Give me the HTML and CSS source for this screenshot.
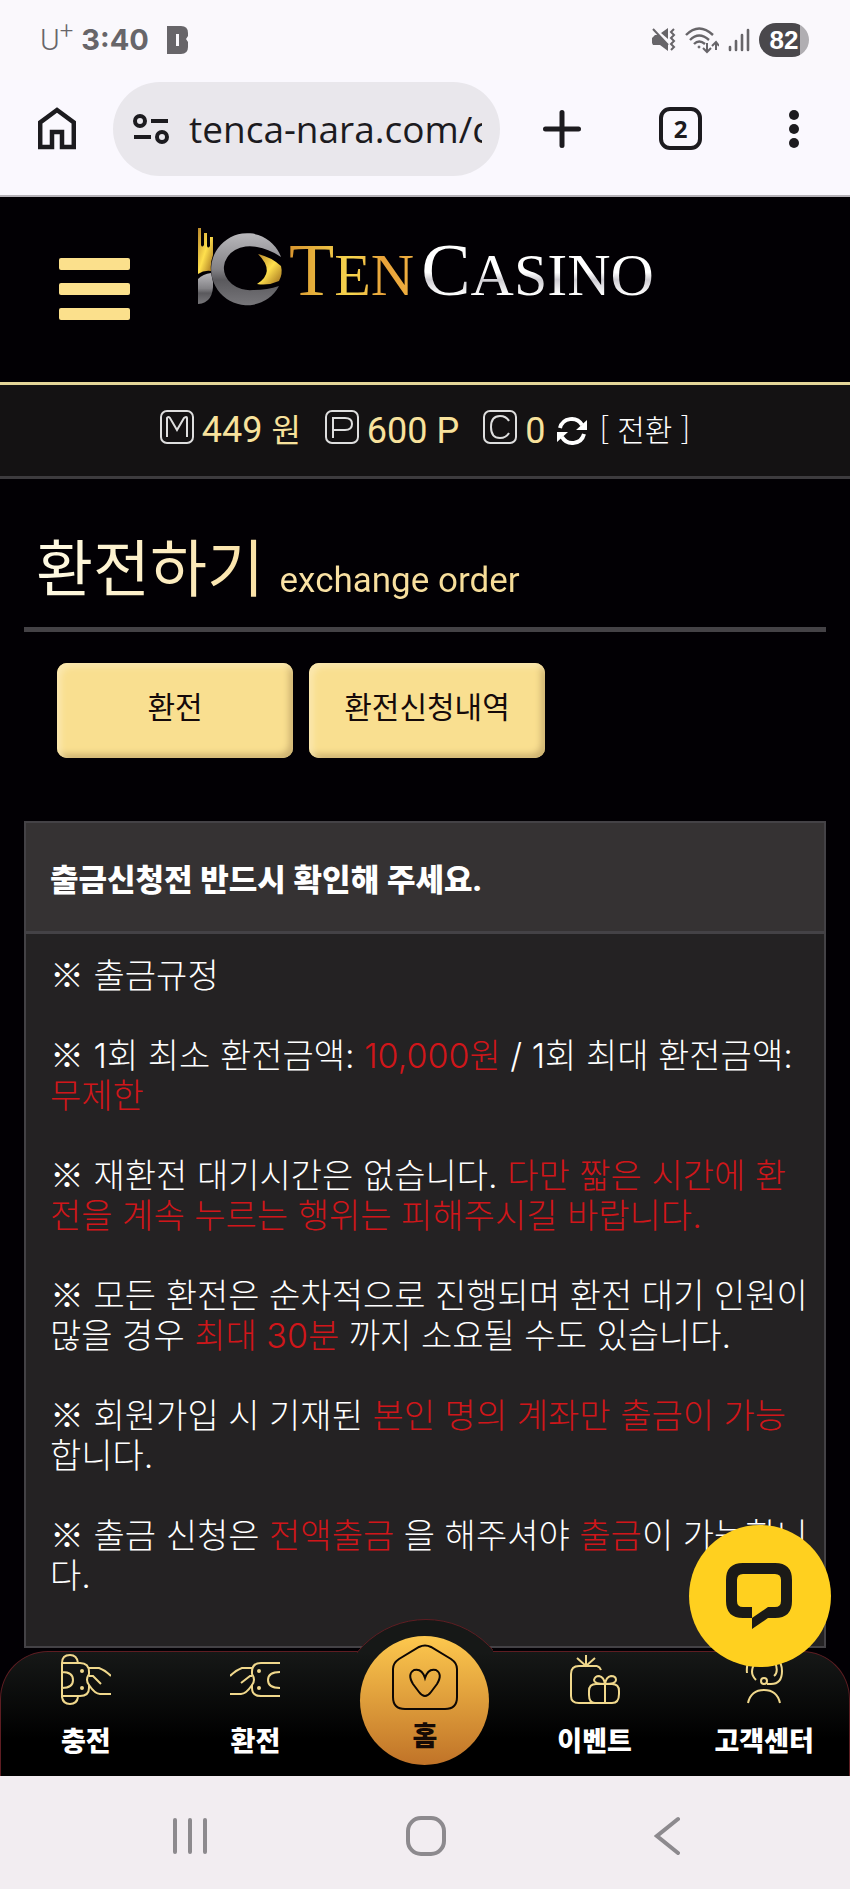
FILE: index.html
```
<!DOCTYPE html>
<html lang="ko">
<head>
    <meta charset="UTF-8">
    <meta name="viewport" content="width=device-width, initial-scale=1.0">
    <title>TEN CASINO - 환전하기</title>
    <link rel="stylesheet" href="styles.css">
</head>
<body>
    <div class="status-bar">
        <div class="status-left">
            <span class="carrier">U<sup>+</sup></span>
            <span class="clock">3:40</span>
            <svg class="app-icon" width="22" height="28" viewBox="0 0 22 28">
                <path fill="#676569" fill-rule="evenodd" d="M0 0H14Q21 0 21 7V10L19 13L21 16V21Q21 28 14 28H0ZM9 8V20H12V8Z"/>
            </svg>
        </div>
        <div class="status-right">
            <svg width="24" height="24" viewBox="0 0 24 24" fill="#676569">
                <path d="M0 10L3 7H6L16 17V23L8 17H1L0 15ZM9 5L16 0V11Z"/>
                <path d="M1 1L16 17M22 1L19 4L22 7L19 10L22 13L19 16L22 19L19 22" fill="none" stroke="#676569" stroke-width="2"/>
            </svg>
            <svg width="34" height="28" viewBox="0 0 34 28" fill="none" stroke="#676569" stroke-width="2.4">
                <path d="M1 9Q14 -4 28 9M5 14Q14 5 24 14M9 18Q14 13 20 18"/>
                <circle cx="14" cy="21" r="1" fill="#676569" stroke-width="1"/>
                <path d="M22 17V26M18 22L22 26L26 22M31 24V16M27 20L31 16L34 20" stroke-width="2"/>
            </svg>
            <svg width="22" height="24" viewBox="0 0 22 24" stroke="#676569" stroke-width="2.6" stroke-linecap="round">
                <path d="M2 19V22M8 13V22M14 7V22M20 2V22"/>
            </svg>
            <span class="battery">82</span>
        </div>
    </div>

    <div class="browser-bar">
        <button class="icon-btn" aria-label="홈페이지">
            <svg width="38" height="43" viewBox="0 0 38 43">
                <path d="M2.200 40V15.500L19 3L35.800 15.500V40H24V25H14V40Z" fill="none" stroke="#1c1b1f" stroke-width="4.500"/>
            </svg>
        </button>
        <div class="url-box">
            <svg width="36" height="30" viewBox="0 0 36 30" fill="none" stroke="#1c1b1f" stroke-width="4">
                <circle cx="7" cy="7" r="5"/>
                <path d="M18 7H35M1 23H18"/>
                <circle cx="29" cy="23" r="5"/>
            </svg>
            <input class="url" type="text" value="tenca-nara.com/c" aria-label="주소">
        </div>
        <div class="browser-actions">
            <button class="icon-btn" aria-label="새 탭">
                <svg width="38" height="38" viewBox="0 0 38 38" stroke="#1c1b1f" stroke-width="5" stroke-linecap="round">
                    <path d="M19 2.500V35.500M2.500 19H35.500"/>
                </svg>
            </button>
            <button class="tab-count" aria-label="탭 2개">2</button>
            <button class="icon-btn" aria-label="메뉴">
                <svg width="12" height="40" viewBox="0 0 12 40" fill="#1c1b1f">
                    <circle cx="6" cy="6" r="5"/><circle cx="6" cy="20" r="5"/><circle cx="6" cy="34" r="5"/>
                </svg>
            </button>
        </div>
    </div>

    <header class="site-header">
        <button class="hamburger" aria-label="전체메뉴"><i></i><i></i><i></i></button>
        <a class="logo" href="#">
            <svg width="86" height="78" viewBox="0 0 86 78">
                <defs>
                    <linearGradient id="gold" x1="0" y1="0" x2="1" y2="1">
                        <stop offset="0" stop-color="#b8862a"/><stop offset=".5" stop-color="#ffe04d"/><stop offset="1" stop-color="#9c6a1c"/>
                    </linearGradient>
                    <linearGradient id="silver" x1="0" y1="0" x2="0" y2="1">
                        <stop offset="0" stop-color="#b9b8bc"/><stop offset=".5" stop-color="#838286"/><stop offset=".65" stop-color="#5a595d"/><stop offset="1" stop-color="#77767a"/>
                    </linearGradient>
                </defs>
                <path fill="url(#gold)" d="M1 0H4V17Q5 20 7 17V5H10V18Q11 21 13 18V9H16V27Q13 35 14 43Q7 42 1 46Z"/>
                <path fill="url(#silver)" d="M1 51Q6 46 14 45L16 54Q17 75 1 76Z"/>
                <path fill="url(#silver)" d="M84 29A36 36 0 1 0 82 58Q70 62 56 62A26 22 0 1 1 60 19Q72 21 84 29Z"/>
                <path fill="url(#gold)" d="M61 26Q74 29 84 38Q86 46 82 53Q71 58 60 56Q79 44 61 26Z"/>
            </svg>
            <span class="logo-ten">T<small>EN</small></span>
            <span class="logo-casino">C<small>ASINO</small></span>
        </a>
    </header>

    <div class="my-info">
        <span class="info-badge"><svg width="34" height="34" viewBox="0 0 34 34"><rect x="1" y="1" width="32" height="32" rx="6"/><path d="M7 27V8Q8 6 10 8L17 20L24 8Q27 6 27 8V27"/></svg></span>
        <span class="info-value">449 <span class="won">원</span></span>
        <span class="info-badge"><svg width="34" height="34" viewBox="0 0 34 34"><rect x="1" y="1" width="32" height="32" rx="6"/><path d="M8 28V8H20Q27 8 27 14Q27 20 20 20H8"/></svg></span>
        <span class="info-value">600 P</span>
        <span class="info-badge"><svg width="34" height="34" viewBox="0 0 34 34"><rect x="1" y="1" width="32" height="32" rx="6"/><path d="M26 11Q23 6 17 6Q8 6 8 17Q8 28 17 28Q23 28 26 23"/></svg></span>
        <span class="info-value">0</span>
        <svg class="refresh" width="30" height="30" viewBox="0 0 30 30">
            <path d="M3 12A12 12 0 0 1 25 9M27 18A12 12 0 0 1 5 21" fill="none" stroke="#fff" stroke-width="4"/>
            <path d="M30 4V14H19ZM0 26V16H11Z" fill="#fff"/>
        </svg>
        <a class="convert" href="#">[ 전환 ]</a>
    </div>

    <main class="content">
        <h1 class="page-title"><span>환전하기 <small>exchange order</small></span></h1>
        <div class="tabs">
            <button class="tab">환전</button>
            <button class="tab">환전신청내역</button>
        </div>
        <section class="notice">
            <h2 class="notice-head">출금신청전 반드시 확인해 주세요.</h2>
            <div class="notice-body">
                <p><i>※</i> 출금규정</p>
                <p><i>※</i> 1회 최소 환전금액: <em>10,000원</em> / 1회 최대 환전금액:<br><em>무제한</em></p>
                <p><i>※</i> 재환전 대기시간은 없습니다. <em>다만 짧은 시간에 환<br>전을 계속 누르는 행위는 피해주시길 바랍니다.</em></p>
                <p><i>※</i> 모든 환전은 순차적으로 진행되며 환전 대기 인원이<br>많을 경우 <em>최대 30분</em> 까지 소요될 수도 있습니다.</p>
                <p><i>※</i> 회원가입 시 기재된 <em>본인 명의 계좌만 출금이 가능</em><br>합니다.</p>
                <p><i>※</i> 출금 신청은 <em>전액출금</em> 을 해주셔야 <em>출금</em>이 가능합니<br>다.</p>
            </div>
        </section>
    </main>

    <nav class="bottom-nav">
        <div class="hump"></div>
        <div class="nav-items">
            <a class="nav-item" href="#">
                <svg width="50" height="52" viewBox="0 0 50 52">
                    <path d="M1 9Q1 1 9 1Q16 1 17 9M1 9V43Q2 50 9 50Q16 50 17 43M1 9H19Q28 9 28 18V20Q24 26 28 31V34Q28 42 19 42H1M1 18Q12 18 12 26Q12 34 1 34M27 14H38Q44 16 50 22M28 22H32L40 30M28 31Q34 40 39 40H50"/>
                    <circle cx="21" cy="17" r="1"/><circle cx="21" cy="34" r="1"/>
                </svg>
                <span>충전</span>
            </a>
            <a class="nav-item" href="#">
                <svg width="50" height="52" viewBox="0 0 50 52">
                    <path d="M50 9H31Q22 9 22 18V20Q26 26 22 31V34Q22 42 31 42H50M50 18Q38 18 38 26Q38 34 50 34M23 14H12Q6 16 0 22M22 22H20L11 29M22 31Q16 40 11 40H0"/>
                    <circle cx="29" cy="17" r="1"/><circle cx="29" cy="34" r="1"/>
                </svg>
                <span>환전</span>
            </a>
            <a class="nav-home" href="#">
                <svg width="66" height="67" viewBox="0 0 66 67">
                    <path d="M27 3Q33 0 39 3L59 15Q65 19 65 25V53Q65 65 53 65H13Q1 65 1 53V25Q1 19 7 15Z"/>
                    <path d="M33 52Q30 52 27 48L21 40Q15 30 22 26Q30 24 33 34Q36 24 44 26Q51 30 45 40L39 48Q36 52 33 52Z"/>
                </svg>
                <span>홈</span>
            </a>
            <a class="nav-item" href="#">
                <svg width="50" height="52" viewBox="0 0 50 52">
                    <path d="M16 1V12M7 4L16 12L25 4M27 12H9Q1 12 1 20V42Q1 49 9 49H42Q49 49 49 40V37Q49 30 42 30H26Q19 30 19 37V41Q19 49 25 49M27 12Q30 13 31 16M35 30V49M35 30Q24 30 24 26Q25 22 29 22Q34 23 35 30Q36 23 41 22Q46 22 46 26Q46 30 35 30"/>
                </svg>
                <span>이벤트</span>
            </a>
            <a class="nav-item" href="#">
                <svg width="50" height="52" viewBox="0 0 50 52">
                    <path d="M8 19Q6 2 25 2Q43 2 43 17Q43 30 32 30H28M17 26Q9 18 17 8M36 8Q40 18 35 22M9 49Q12 36 25 36Q38 36 41 49"/>
                    <circle cx="25" cy="27" r="3"/>
                </svg>
                <span>고객센터</span>
            </a>
        </div>
        <button class="chat" aria-label="채팅 상담">
            <svg width="68" height="66" viewBox="0 0 68 66">
                <path fill="#1b1a17" fill-rule="evenodd" d="M17 0H49Q66 0 66 17V38Q66 55 49 55H42L26 66V55H17Q0 55 0 38V17Q0 0 17 0ZM17 11Q11 11 11 17V38Q11 44 17 44H26V55L42 44H49Q55 44 55 38V17Q55 11 49 11Z"/>
            </svg>
        </button>
    </nav>

    <div class="system-nav">
        <button class="icon-btn" aria-label="최근 앱">
            <svg width="36" height="40" viewBox="0 0 36 40"><path d="M3 4V36M18 4V36M33 4V36"/></svg>
        </button>
        <button class="icon-btn" aria-label="홈">
            <svg width="40" height="40" viewBox="0 0 40 40"><rect x="2" y="2" width="36" height="36" rx="13"/></svg>
        </button>
        <button class="icon-btn" aria-label="뒤로">
            <svg width="26" height="40" viewBox="0 0 26 40"><path d="M24 3L3 20L24 37"/></svg>
        </button>
    </div>
</body>
</html>
```
FILE: styles.css
```
* {
    box-sizing: border-box;
}
body {
    margin: 0;
    min-height: 100vh;
    display: flex;
    flex-direction: column;
    background: #020004;
    color: #fff;
    font-family: Roboto, 'Noto Sans CJK KR', sans-serif;
}
button {
    padding: 0;
    border: 0;
    background: none;
    font-family: inherit;
    cursor: pointer;
}
a {
    color: inherit;
    text-decoration: none;
}
svg {
    display: block;
    flex: none;
}

/* phone status bar */
.status-bar {
    display: flex;
    justify-content: space-between;
    align-items: center;
    height: 80px;
    padding: 0 41px 0 40px;
    background: #faf8fc;
    color: #676569;
}
.status-left,
.status-right {
    display: flex;
    align-items: center;
}
.carrier {
    font-size: 30px;
    font-weight: 300;
    line-height: 32px;
    margin-right: 8px;
}
.carrier sup {
    font-size: 24px;
    line-height: 0;
}
.clock {
    font-family: Inter, sans-serif;
    font-size: 29px;
    font-weight: 700;
    line-height: 32px;
    margin-right: 18px;
}
.status-right {
    gap: 9px;
}
.battery {
    width: 50px;
    height: 34px;
    border-radius: 17px;
    background: linear-gradient(90deg, #4a484c 82%, #b0aeb2 82%);
    color: #fff;
    font-family: 'Liberation Sans', sans-serif;
    font-size: 26px;
    font-weight: 700;
    line-height: 34px;
    text-align: center;
}

/* browser toolbar */
.browser-bar {
    display: flex;
    align-items: center;
    height: 117px;
    padding: 0 50px 18px 38px;
    border-bottom: 2px solid #b5b2b8;
    background: #faf8fe;
}
.url-box {
    flex: 1;
    min-width: 0;
    display: flex;
    align-items: center;
    gap: 20px;
    height: 94px;
    margin: 0 43px 0 37px;
    padding: 0 18px 0 20px;
    border-radius: 47px;
    background: #e9e7ec;
}
.url {
    flex: 1;
    min-width: 0;
    padding: 0;
    border: 0;
    background: none;
    color: #1c1b1f;
    font-family: 'Open Sans', sans-serif;
    font-size: 37px;
    line-height: 48px;
    outline: none;
}
.browser-actions {
    flex: none;
    display: flex;
    align-items: center;
    justify-content: space-between;
    width: 257px;
}
.tab-count {
    width: 43px;
    height: 43px;
    margin-right: 8px;
    border: 4px solid #1c1b1f;
    border-radius: 11px;
    color: #1c1b1f;
    font-family: 'Open Sans', sans-serif;
    font-size: 24px;
    font-weight: 700;
    line-height: 32px;
}

/* site header */
.site-header {
    display: flex;
    align-items: flex-start;
    height: 188px;
    padding: 31px 0 0 59px;
    border-bottom: 3px solid #e4d598;
}
.hamburger {
    display: flex;
    flex-direction: column;
    gap: 13px;
    margin: 30px 67px 0 0;
}
.hamburger i {
    width: 71px;
    height: 12px;
    border-radius: 2px;
    background: #fbe08c;
}
.logo {
    display: flex;
    align-items: flex-start;
    font-family: 'Liberation Serif', serif;
    font-size: 74px;
    line-height: 84px;
}
.logo small {
    font-size: 60px;
}
.logo span {
    background: linear-gradient(90deg, #d9952f, #f7d64f 50%, #e8a23a 75%, #f0b040);
    background-clip: text;
    -webkit-background-clip: text;
    color: transparent;
}
.logo .logo-ten {
    margin: 0 7px 0 6px;
}
.logo .logo-casino {
    background-image: linear-gradient(#fff 50%, #cfcdd3 58%, #fff 75%);
}

/* balances */
.my-info {
    display: flex;
    align-items: center;
    justify-content: center;
    height: 94px;
    border-bottom: 3px solid #3d3b3e;
    background: #141213;
    color: #f8e29c;
}
.info-badge {
    margin: 0 8px 8px 0;
}
.info-badge svg {
    fill: none;
    stroke: #dedede;
    stroke-width: 2;
}
.info-value {
    margin-right: 24px;
    font-size: 36px;
    line-height: 44px;
}
.won {
    font-size: 32px;
}
.info-value:nth-of-type(6) {
    margin-right: 12px;
}
.refresh {
    margin-right: 12px;
}
.convert {
    padding-bottom: 6px;
    color: #fff;
    font-family: 'Noto Sans CJK KR', sans-serif;
    font-size: 30px;
    font-weight: 300;
    line-height: 44px;
}

/* page body */
.content {
    padding: 43px 24px 0;
}
.page-title {
    margin: 0;
    padding: 0 12px 7px;
    border-bottom: 5px solid #444246;
    font-size: 62px;
    font-weight: 400;
    line-height: 98px;
}
.page-title span {
    background: linear-gradient(90deg, #fffbe6, #fbe3a8 45%, #f6dc96);
    background-clip: text;
    -webkit-background-clip: text;
    color: transparent;
}
.page-title small {
    font-size: 35px;
    line-height: 40px;
}
.tabs {
    display: flex;
    gap: 16px;
    margin: 31px 33px 0;
}
.tab {
    width: 236px;
    height: 95px;
    padding-bottom: 6px;
    border-radius: 10px;
    background: #f9df90;
    box-shadow: inset 4px 4px 6px #fbe8b0, inset -4px -4px 6px #cdb271;
    color: #150a0a;
    font-size: 30px;
    line-height: 40px;
}
.notice {
    margin-top: 63px;
    border: 2px solid #444246;
    background: #242223;
}
.notice-head {
    margin: 0;
    padding: 36px 24px 28px;
    border-bottom: 3px solid #444246;
    background: #353233;
    font-size: 31px;
    font-weight: 900;
    line-height: 44px;
}
.notice-body {
    padding: 22px 0 10px 24px;
    font-family: Inter, 'Noto Sans CJK KR', sans-serif;
    font-size: 34px;
    font-weight: 300;
    line-height: 40px;
    white-space: nowrap;
}
.notice-body p {
    margin: 0 0 40px;
}
.notice-body i {
    font-family: 'Noto Sans CJK KR', sans-serif;
    font-style: normal;
    line-height: 1;
}
.notice-body em {
    color: #d0161a;
    font-style: normal;
}

/* bottom menu */
.bottom-nav {
    position: relative;
    height: 125px;
    margin-top: 3px;
    border: 1px solid #5e1d22;
    border-bottom: 0;
    border-radius: 48px 48px 0 0;
    background: linear-gradient(#161817, #000 70%);
}
.hump {
    position: absolute;
    top: -33px;
    left: 50%;
    width: 136px;
    height: 34px;
    margin-left: -68px;
    overflow: hidden;
}
.hump::before {
    content: '';
    position: absolute;
    top: 0;
    left: -20px;
    width: 176px;
    height: 176px;
    border: 1px solid #5e1d22;
    border-radius: 50%;
    background: #161817;
}
.nav-items {
    position: relative;
    display: grid;
    grid-template-columns: repeat(5, 1fr);
    justify-items: center;
}
.nav-item {
    padding-top: 2px;
    font-size: 27px;
    font-weight: 900;
    line-height: 36px;
    text-align: center;
}
.nav-item svg {
    margin: 0 auto 18px;
    fill: none;
    stroke: #f0d88c;
    stroke-width: 2;
}
.nav-home {
    width: 129px;
    height: 129px;
    margin-top: -16px;
    padding-top: 8px;
    border-radius: 50%;
    background: linear-gradient(#fdc84e, #c07328);
    color: #150a05;
    font-size: 27px;
    font-weight: 900;
    line-height: 36px;
    text-align: center;
}
.nav-home svg {
    margin: 0 auto 8px;
    fill: none;
    stroke: #0d0704;
    stroke-width: 2;
}
.chat {
    position: absolute;
    top: -127px;
    right: 18px;
    display: grid;
    place-items: center;
    width: 142px;
    height: 142px;
    border-radius: 50%;
    background: #ffd01f;
}

/* android navigation */
.system-nav {
    flex: 1;
    display: grid;
    grid-template-columns: 1fr auto 1fr;
    align-items: center;
    min-height: 113px;
    padding: 6px 170px 0 172px;
    background: #f2edf1;
}
.system-nav .icon-btn:last-child {
    justify-self: end;
}
.system-nav svg {
    fill: none;
    stroke: #8d8a8e;
    stroke-width: 4;
    stroke-linecap: round;
}
```
